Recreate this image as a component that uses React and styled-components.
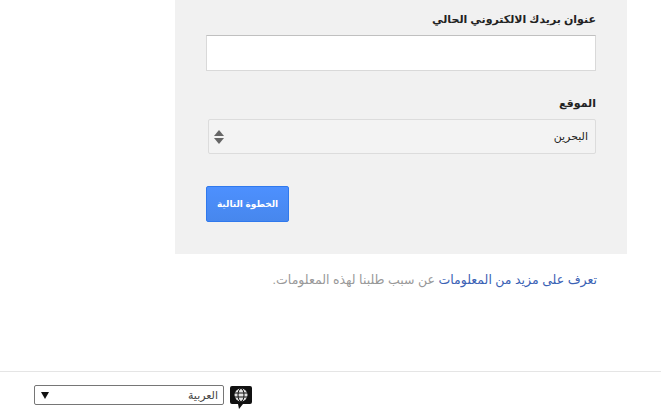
import React from "react";
import styled, { createGlobalStyle } from "styled-components";

const Global = createGlobalStyle`
  html, body { margin: 0; padding: 0; background: #fff; }
  body { font-family: "Liberation Sans", "DejaVu Sans", sans-serif; }
`;
const Page = styled.div`
  width: 661px; height: 414px; overflow: hidden; display: flex; flex-direction: column;
`;
const Main = styled.main`
  height: 371px; padding-left: 175px; box-sizing: border-box;
`;
const Panel = styled.form`
  width: 452px; height: 254px; box-sizing: border-box; background: #f1f1f1;
  padding: 11px 31px 0; display: flex; flex-direction: column;
`;
const Label = styled.label`
  display: block; font-size: 11px; line-height: 16px; font-weight: bold; color: #222; text-align: right; height: 24px;
`;
const TextInput = styled.div`
  height: 36px; box-sizing: border-box; background: #fff; border: 1px solid #d9d9d9; border-top-color: #c0c0c0; margin-bottom: 24px;
`;
const SelectBox = styled.div`
  height: 35px; margin-left: 2px; box-sizing: border-box; background: #f3f3f3; border: 1px solid #dcdcdc; border-radius: 2px;
  display: flex; align-items: center; justify-content: space-between; padding: 0 7px 0 5px;
  font-size: 11px; color: #222;
`;
const Button = styled.button`
  margin-top: 32px; width: 83px; height: 36px; align-self: flex-end; box-sizing: border-box;
  background: linear-gradient(#4d90fe, #4787ed); border: 1px solid #3079ed; border-radius: 2px;
  color: #fff; font: bold 9px "Liberation Sans", "DejaVu Sans", sans-serif; padding: 0;
`;
const Note = styled.p`
  width: 452px; box-sizing: border-box; margin: 17px 0 0; padding-right: 30px; text-align: right; font-size: 12.5px; line-height: 18px; color: #999;
  a { color: #3b62b5; text-decoration: none; }
`;
const Footer = styled.footer`
  flex: 1; border-top: 1px solid #e5e5e5; display: flex; align-items: flex-start; padding: 13px 0 0 34px; gap: 6px;
`;
const Lang = styled.div`
  width: 190px; height: 20px; box-sizing: border-box; border: 1px solid #767676; border-radius: 2px; background: #fff;
  display: flex; align-items: center; justify-content: space-between; padding: 0 5px 0 6px; font-size: 11px; color: #444;
`;
const Caret = styled.span`
  width: 0; height: 0; border-left: 4px solid transparent; border-right: 4px solid transparent; border-top: 7px solid #111;
`;
const BubbleIcon = styled.svg`
  margin-top: 1px;
`;

const Sorter = () => (
  <svg width="10" height="14" viewBox="0 0 10 14">
    <path d="M5 0 L10 6 L0 6 Z" fill="#666" />
    <path d="M0 8 L10 8 L5 14 Z" fill="#666" />
  </svg>
);
const GlobeBubble = () => (
  <BubbleIcon width="22" height="23" viewBox="0 0 22 23">
    <path d="M2 0 H20 a2 2 0 0 1 2 2 V16 a2 2 0 0 1 -2 2 H13 L9 23 L8 18 H2 a2 2 0 0 1 -2 -2 V2 a2 2 0 0 1 2 -2 Z" fill="#111" />
    <circle cx="11" cy="9" r="6.5" fill="#e2e2e2" />
    <path d="M4 7 H18 M4 11 H18" stroke="#111" strokeWidth="1" fill="none" />
    <ellipse cx="11" cy="9" rx="3" ry="6.5" stroke="#111" strokeWidth="1" fill="none" />
  </BubbleIcon>
);

export default function App() {
  return (
    <Page>
      <Global />
      <Main>
        <Panel dir="rtl">
          <Label>عنوان بريدك الالكتروني الحالي</Label>
          <TextInput />
          <Label>الموقع</Label>
          <SelectBox><span>البحرين</span><Sorter /></SelectBox>
          <Button type="button">الخطوة التالية</Button>
        </Panel>
        <Note dir="rtl"><a href="#a">تعرف على مزيد من المعلومات</a> عن سبب طلبنا لهذه المعلومات.</Note>
      </Main>
      <Footer>
        <Lang dir="rtl"><span>العربية</span><Caret /></Lang>
        <GlobeBubble />
      </Footer>
    </Page>
  );
}
